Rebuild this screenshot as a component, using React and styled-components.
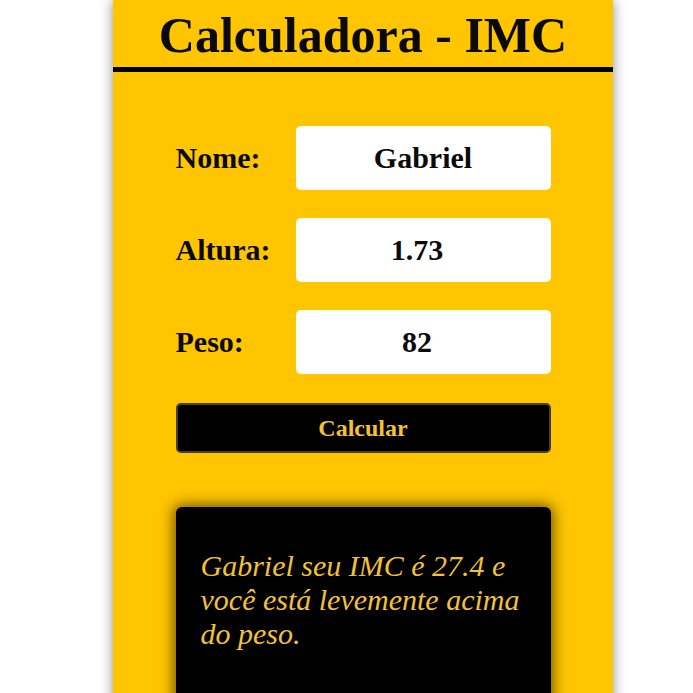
import React from 'react';
import styled, { createGlobalStyle } from 'styled-components';

const GlobalStyle = createGlobalStyle`
  body {
    margin: 0;
    background: #fff;
    font-family: 'Liberation Serif', 'Times New Roman', serif;
  }
`;

const Panel = styled.main`
  width: 500px;
  min-height: 100vh;
  margin-left: 113px;
  background: #ffc500;
  box-shadow: 0 0 12px rgba(0, 0, 0, 0.45);
  overflow: hidden;
`;

const Header = styled.header`
  padding: 7px 0 3px;
  border-bottom: 5px solid #000;
`;

const Title = styled.h1`
  margin: 0;
  font-size: 50px;
  line-height: 57px;
  font-weight: 700;
  text-align: center;
  color: #0a0a0a;
`;

const Form = styled.form`
  display: flex;
  flex-direction: column;
  gap: 28px;
  width: 375px;
  margin: 54px auto 0;
`;

const Row = styled.label`
  display: grid;
  grid-template-columns: 120px minmax(0, 1fr);
  align-items: center;
`;

const LabelText = styled.span`
  font-size: 30px;
  font-weight: 700;
  color: #0a0a0a;
`;

const Field = styled.input`
  width: 100%;
  min-width: 0;
  height: 64px;
  box-sizing: border-box;
  padding: 0 ${(p) => (p.type === 'number' ? '12px' : '0')} 0 0;
  border: none;
  border-radius: 5px;
  background: #fff;
  font-family: inherit;
  font-size: 30px;
  font-weight: 700;
  color: #0a0a0a;
  text-align: center;
  outline: none;

  &::-webkit-inner-spin-button,
  &::-webkit-outer-spin-button {
    -webkit-appearance: none;
    margin: 0;
  }
`;

const Button = styled.button`
  height: 50px;
  margin-top: 1px;
  border: 2px solid #4d4010;
  border-radius: 5px;
  background: #000;
  color: #f4c138;
  font-family: inherit;
  font-size: 24px;
  font-weight: 700;
  cursor: pointer;
`;

const Result = styled.section`
  width: 375px;
  min-height: 220px;
  box-sizing: border-box;
  margin: 54px auto 0;
  padding: 42px 25px 40px;
  border-radius: 6px;
  background: #000;
  box-shadow: 0 0 14px 2px rgba(0, 0, 0, 0.6);
`;

const ResultText = styled.p`
  margin: 0;
  font-size: 30px;
  font-style: italic;
  line-height: 34px;
  color: #f2c03a;
`;

export default function App() {
  return (
    <>
      <GlobalStyle />
      <Panel>
        <Header>
          <Title>Calculadora - IMC</Title>
        </Header>
        <Form onSubmit={(e) => e.preventDefault()}>
          <Row>
            <LabelText>Nome:</LabelText>
            <Field type="text" defaultValue="Gabriel" />
          </Row>
          <Row>
            <LabelText>Altura:</LabelText>
            <Field type="number" step="0.01" defaultValue="1.73" />
          </Row>
          <Row>
            <LabelText>Peso:</LabelText>
            <Field type="number" defaultValue="82" />
          </Row>
          <Button type="submit">Calcular</Button>
        </Form>
        <Result>
          <ResultText>
            Gabriel seu IMC é 27.4 e você está levemente acima do peso.
          </ResultText>
        </Result>
      </Panel>
    </>
  );
}
